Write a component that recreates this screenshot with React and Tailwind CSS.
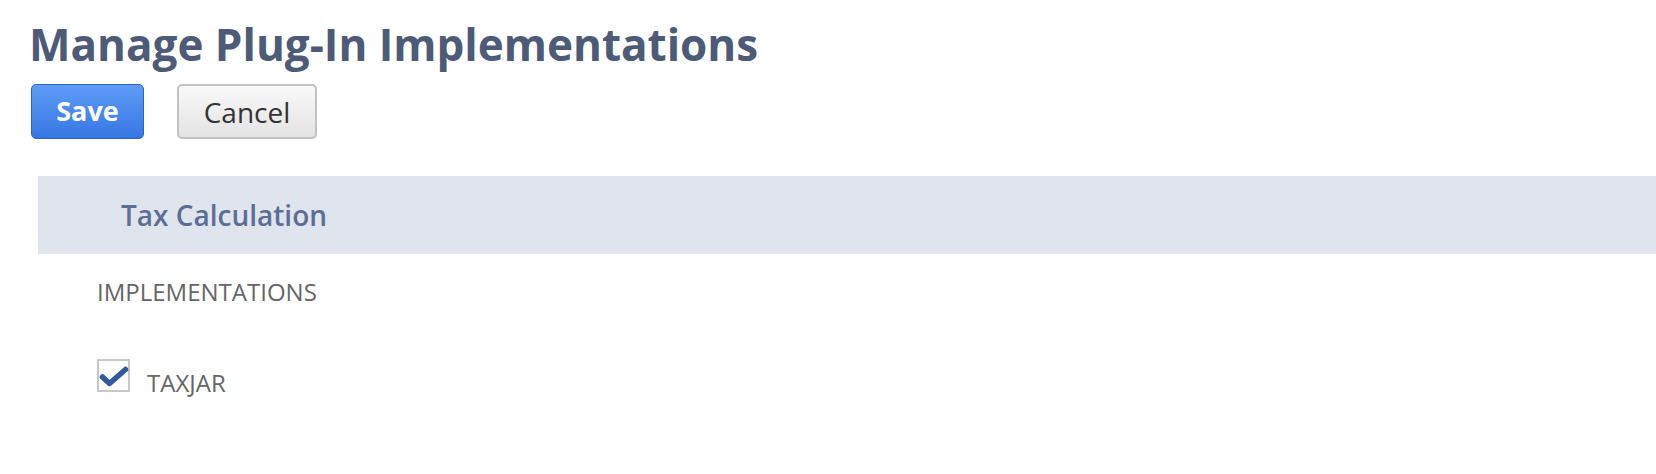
import React from 'react';

const App = () => {
  return (
    <div className="w-[1656px] h-[474px] bg-white font-['Open_Sans',sans-serif] overflow-hidden">
      <div className="pl-[29px] pt-[18px]">
        <h1 className="text-[44px] leading-[52px] font-bold text-[#4d5a78]">Manage Plug-In Implementations</h1>
        <div className="flex gap-[33px] mt-[14px] pl-[2px]">
          <button className="w-[113px] h-[55px] rounded-[5px] border border-[#2c62c4] bg-gradient-to-b from-[#5e9df6] to-[#3676e4] text-white text-[27px] font-bold">
            Save
          </button>
          <button className="w-[140px] h-[55px] rounded-[5px] border-2 border-[#c2c2c2] bg-gradient-to-b from-[#f9f9f9] to-[#e3e3e3] text-[#333] text-[28px]">
            Cancel
          </button>
        </div>
      </div>

      <div className="ml-[38px] mt-[37px] h-[78px] bg-[#e0e4ed] flex items-center pl-[83px]">
        <span className="text-[28px] font-semibold text-[#5b6f96]">Tax Calculation</span>
      </div>

      <div className="pl-[97px]">
        <div className="mt-[22px] text-[24px] leading-[32px] text-[#666]">IMPLEMENTATIONS</div>
        <label className="flex items-end gap-[17px] mt-[51px]">
          <span className="relative w-[33px] h-[33px] border-2 border-[#c8c8c8] bg-white">
            <svg viewBox="0 0 33 33" className="absolute left-[-2px] top-[-2px] w-[33px] h-[33px]">
              <path d="M5.5 18 L12.5 24.5 L28.5 10.5" fill="none" stroke="#2f5a9e" strokeWidth="5.5" strokeLinecap="round" strokeLinejoin="round" />
            </svg>
          </span>
          <span className="text-[24px] text-[#666] leading-none mb-[-3px]">TAXJAR</span>
        </label>
      </div>
    </div>
  );
};

export default App;
